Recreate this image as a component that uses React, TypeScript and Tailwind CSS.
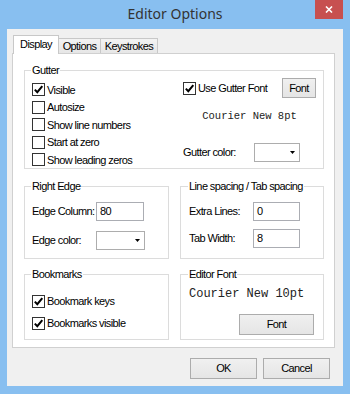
import React from "react";

function CheckBox({ checked, label, tall }: { checked?: boolean; label: string; tall?: boolean }) {
  return (
    <div className={`flex items-center gap-[2px] ${tall ? "h-[22px]" : "h-[17.5px]"}`}>
      <span className="flex h-[13px] w-[13px] shrink-0 items-center justify-center border border-[#333] bg-white">
        {checked && (
          <svg viewBox="0 0 11 11" className="h-[11px] w-[11px]">
            <path d="M1.8 5.6 4.3 8.2 9.3 2.2" fill="none" stroke="#000" strokeWidth="2" />
          </svg>
        )}
      </span>
      <span className="whitespace-nowrap">{label}</span>
    </div>
  );
}

function Group({ title, className, children }: { title: string; className: string; children: React.ReactNode }) {
  return (
    <fieldset className={`border border-[#dcdcdc] ${className}`}>
      <legend className="-ml-[1px] px-[1px] leading-[13px]">{title}</legend>
      {children}
    </fieldset>
  );
}

function ColorCombo({ width }: { width: string }) {
  return (
    <div className={`flex h-[19px] items-center justify-end border border-[#adadad] bg-white pr-[4px] ${width}`}>
      <svg viewBox="0 0 5 3" className="h-[3px] w-[5px]">
        <path d="M0 0h5L2.5 3z" fill="#000" />
      </svg>
    </div>
  );
}

function TextBox({ value, width }: { value: string; width: string }) {
  return (
    <div className={`flex h-[19px] items-center border border-[#abadb3] bg-white pl-[3px] ${width}`}>
      {value}
    </div>
  );
}

function Button({ label, width, height }: { label: string; width: string; height: string }) {
  return (
    <div
      className={`flex items-center justify-center border border-[#acacac] bg-gradient-to-b from-[#f0f0f0] to-[#e5e5e5] ${width} ${height}`}
    >
      {label}
    </div>
  );
}

export default function App() {
  return (
    <div className="flex h-[394px] w-[350px] flex-col bg-[#88bff0] font-['Liberation_Sans',Arial,sans-serif] text-[11px] tracking-[-0.6px] text-black">
      {/* title bar */}
      <div className="relative flex h-[29px] items-center justify-center pb-[2px] font-['Noto_Sans',sans-serif] text-[14px] tracking-normal text-[#333]">
        Editor Options
        <div className="absolute right-[7px] top-0 flex h-[19px] w-[28px] items-center justify-center bg-[#c75050]">
          <svg viewBox="0 0 8 7" className="h-[7px] w-[8px]">
            <path d="M1 0.5 7 6.5M7 0.5 1 6.5" stroke="#fff" strokeWidth="1.6" />
          </svg>
        </div>
      </div>

      {/* client area */}
      <div className="mx-[7px] flex h-[357px] flex-col bg-[#f0f0f0] pl-[5px] pt-[6px]">
        <div className="relative z-10 ml-[1px] flex h-[18px] items-end">
          <div className="z-10 -mb-px flex h-[19px] w-[46px] items-center justify-center border border-b-0 border-[#c8c8c8] bg-white pb-[2px]">
            Display
          </div>
          <div className="-ml-px flex h-[15px] w-[43px] items-center justify-center border border-b-0 border-[#c8c8c8] bg-gradient-to-b from-[#f3f3f3] to-[#e6e6e6]">
            Options
          </div>
          <div className="-ml-px flex h-[15px] w-[58px] items-center justify-center border border-b-0 border-[#c8c8c8] bg-gradient-to-b from-[#f3f3f3] to-[#e6e6e6]">
            Keystrokes
          </div>
        </div>

        {/* tab panel */}
        <div className="flex h-[295px] w-[323px] flex-col border border-[#d0d0d0] bg-white pl-[11px] pt-[10px]">
          <Group title="Gutter" className="flex h-[105px] w-[300px] pl-[7px]">
            <div className="flex w-[151px] flex-col pt-[4px]">
              <CheckBox checked label="Visible" />
              <CheckBox label="Autosize" />
              <CheckBox label="Show line numbers" />
              <CheckBox label="Start at zero" />
              <CheckBox label="Show leading zeros" />
            </div>
            <div className="flex flex-1 flex-col pr-[7px] pt-[1px]">
              <div className="flex h-[20px] items-center justify-between">
                <CheckBox checked label="Use Gutter Font" />
                <Button label="Font" width="w-[34px]" height="h-[20px]" />
              </div>
              <div className="mt-[12px] flex h-[13px] items-center justify-center font-['Liberation_Mono','Courier_New',monospace] text-[10.5px] tracking-normal text-[#222]">
                Courier New 8pt
              </div>
              <div className="mt-[20px] flex h-[19px] items-center">
                <span className="w-[71px]">Gutter color:</span>
                <ColorCombo width="w-[46px]" />
              </div>
            </div>
          </Group>

          <div className="mt-[11px] flex gap-[11px]">
            <Group title="Right Edge" className="flex h-[79px] w-[145px] flex-col pl-[7px]">
              <div className="mt-[9px] flex h-[19px] items-center">
                <span className="w-[64px]">Edge Column:</span>
                <TextBox value="80" width="w-[48px]" />
              </div>
              <div className="mt-[10px] flex h-[19px] items-center">
                <span className="w-[64px]">Edge color:</span>
                <ColorCombo width="w-[49px]" />
              </div>
            </Group>
            <Group title="Line spacing / Tab spacing" className="flex h-[79px] w-[144px] flex-col pl-[8px]">
              <div className="mt-[9px] flex h-[19px] items-center">
                <span className="w-[64px]">Extra Lines:</span>
                <TextBox value="0" width="w-[47px]" />
              </div>
              <div className="mt-[8px] flex h-[19px] items-center">
                <span className="w-[64px]">Tab Width:</span>
                <TextBox value="8" width="w-[47px]" />
              </div>
            </Group>
          </div>

          <div className="mt-[9px] flex gap-[11px]">
            <Group title="Bookmarks" className="flex h-[72px] w-[145px] flex-col pl-[7px]">
              <div className="mt-[9px] flex flex-col">
                <CheckBox checked tall label="Bookmark keys" />
                <CheckBox checked tall label="Bookmarks visible" />
              </div>
            </Group>
            <Group title="Editor Font" className="flex h-[72px] w-[144px] flex-col pl-[8px] pr-[9px]">
              <div className="mt-[6px] flex h-[14px] items-center font-['Liberation_Mono','Courier_New',monospace] text-[12px] tracking-normal text-[#222]">
                Courier New 10pt
              </div>
              <div className="mt-[13px] flex justify-end">
                <Button label="Font" width="w-[75px]" height="h-[21px]" />
              </div>
            </Group>
          </div>
        </div>

        <div className="mr-[13px] mt-[10px] flex justify-end gap-[6px]">
          <Button label="OK" width="w-[67px]" height="h-[21px]" />
          <Button label="Cancel" width="w-[67px]" height="h-[21px]" />
        </div>
      </div>
    </div>
  );
}
